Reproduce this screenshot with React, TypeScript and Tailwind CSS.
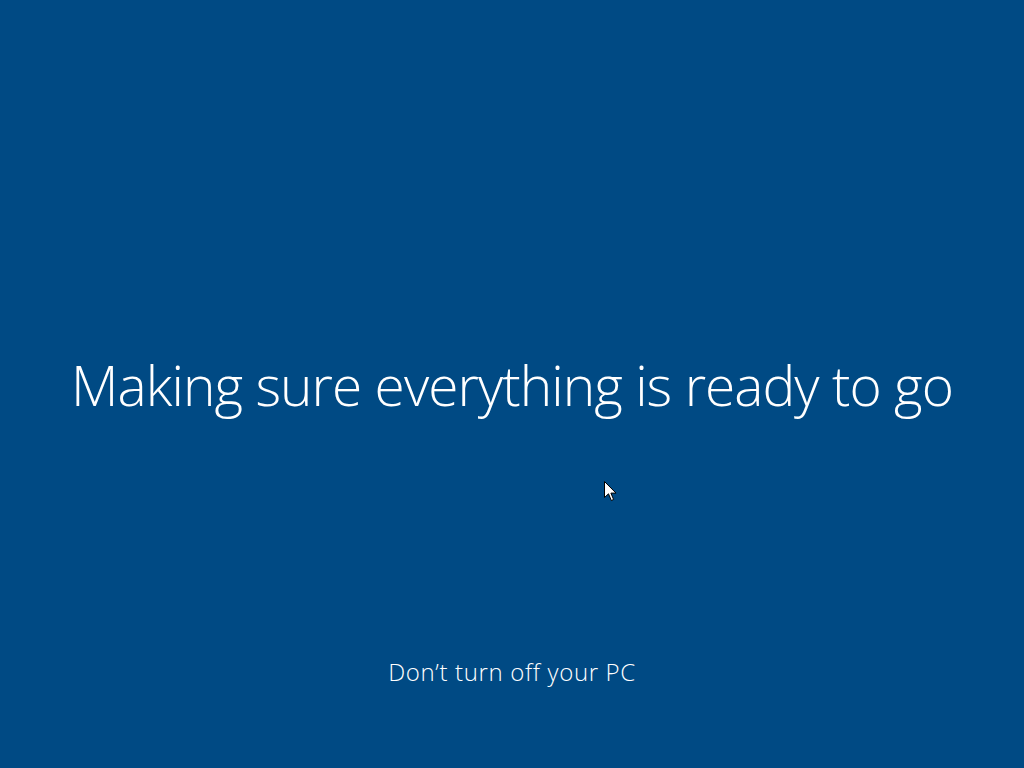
export default function App() {
    return (
        <div className="relative h-screen w-full bg-[#004a84] flex flex-col items-center text-white font-['Open_Sans','Noto_Sans',sans-serif]">
            {/* Main message */}
            <h1 className="mt-[349px] text-[55px] font-light leading-[72px] tracking-[-0.95px]">
                Making sure everything is ready to go
            </h1>

            {/* Footer note */}
            <p className="mt-[235px] text-[24px] font-light leading-[32px] tracking-[0.65px]">
                Don’t turn off your PC
            </p>

            {/* Mouse pointer */}
            <svg
                className="absolute left-[604px] top-[481px]"
                width="13"
                height="21"
                viewBox="0 0 13 21"
            >
                <path
                    d="M0.5 0.5 L0.5 16.5 L4.5 12.8 L7.3 19.5 L9.6 18.5 L6.9 12.1 L12 12.1 Z"
                    fill="#ffffff"
                    stroke="#000000"
                    strokeWidth="1"
                    strokeLinejoin="miter"
                />
            </svg>
        </div>
    );
}
